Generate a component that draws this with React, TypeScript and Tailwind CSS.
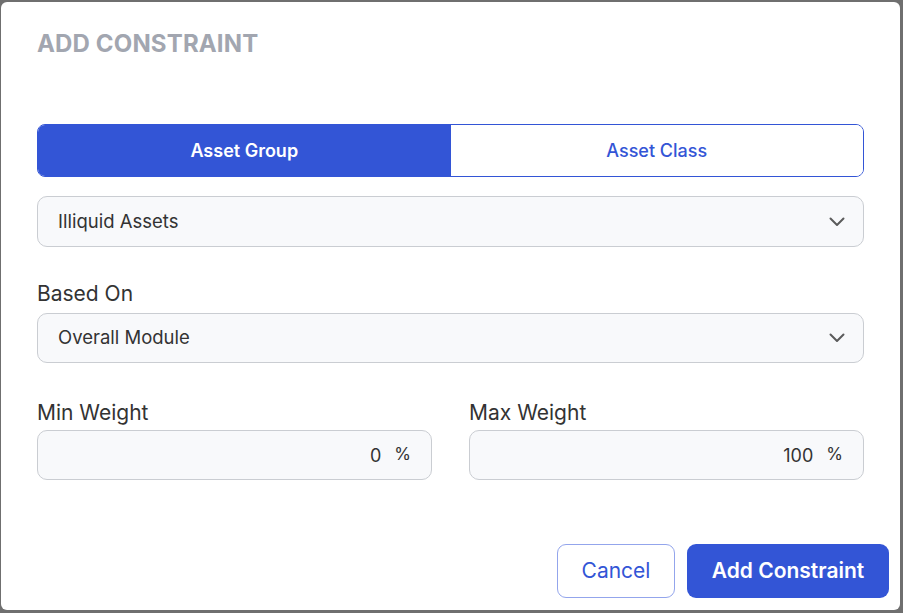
import React from "react";

const Chevron = () => (
  <svg width="16" height="10" viewBox="0 0 16 10" fill="none">
    <path d="M1.5 1.5 L8 8 L14.5 1.5" stroke="#5b5b5b" strokeWidth="2" strokeLinecap="round" strokeLinejoin="round" />
  </svg>
);

export default function App() {
  return (
    <div
      className="w-[903px] h-[613px] bg-[#6f6f6f] pt-[2px] pl-[1px] overflow-hidden"
      style={{ fontFamily: "Inter, 'Noto Sans', sans-serif" }}
    >
      <div className="w-[899px] h-[608px] bg-white rounded-[6px] flex flex-col">
        <div className="px-[36px] pt-[26px]">
          <h1 className="text-[24px] leading-[32px] font-bold text-[#a2a6b0] tracking-[0.15px]">ADD CONSTRAINT</h1>

          <div className="mt-[64px] h-[53px] flex border border-[#3355d6] rounded-[8px] overflow-hidden">
            <button className="flex-1 bg-[#3355d6] text-white text-[18px] font-semibold">Asset Group</button>
            <button className="flex-1 bg-white text-[#3355d6] text-[18px] font-medium">Asset Class</button>
          </div>

          <div className="mt-[19px] h-[51px] flex items-center justify-between pl-[20px] pr-[21px] bg-[#f8f9fb] border border-[#cacdd2] rounded-[10px]">
            <span className="text-[18.5px] text-[#333]">Illiquid Assets</span>
            <span className="mr-[-3px]"><Chevron /></span>
          </div>

          <div className="mt-[35px] mb-[7px] text-[21px] leading-[24px] text-[#333]">Based On</div>
          <div className="h-[50px] flex items-center justify-between pl-[20px] pr-[21px] bg-[#f8f9fb] border border-[#cacdd2] rounded-[10px]">
            <span className="text-[18.5px] text-[#333]">Overall Module</span>
            <span className="mr-[-3px]"><Chevron /></span>
          </div>

          <div className="mt-[38px] grid grid-cols-2 gap-x-[37px]">
            <div>
              <div className="mb-[5px] text-[21px] leading-[24px] text-[#333]">Min Weight</div>
              <div className="h-[50px] flex items-center justify-end pr-[20px] bg-[#f8f9fb] border border-[#cacdd2] rounded-[10px] text-[18px] text-[#333]">
                <span>0</span>
                <span className="ml-[13px] text-[17px]">%</span>
              </div>
            </div>
            <div>
              <div className="mb-[5px] text-[21px] leading-[24px] text-[#333]">Max Weight</div>
              <div className="h-[50px] flex items-center justify-end pr-[20px] bg-[#f8f9fb] border border-[#cacdd2] rounded-[10px] text-[18px] text-[#333]">
                <span>100</span>
                <span className="ml-[13px] text-[17px]">%</span>
              </div>
            </div>
          </div>
        </div>

        <div className="mt-[64px] flex justify-end pr-[11px] gap-[12px]">
          <button className="w-[118px] h-[54px] border border-[#93a5ec] rounded-[9px] text-[21px] text-[#3355d6] bg-white">Cancel</button>
          <button className="w-[202px] h-[54px] rounded-[9px] bg-[#3355d6] text-white text-[21px] font-semibold">Add Constraint</button>
        </div>
      </div>
    </div>
  );
}
